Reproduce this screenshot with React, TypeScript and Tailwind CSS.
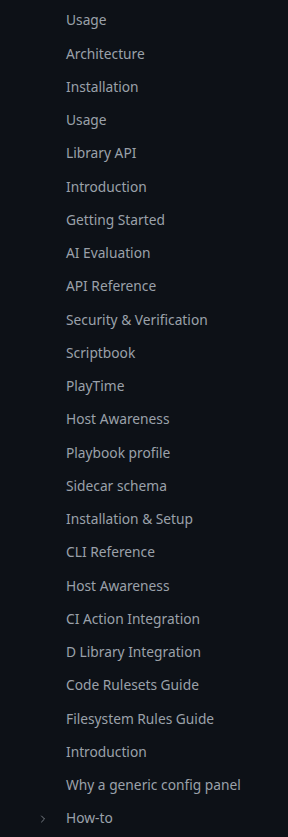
import { ChevronRight } from "lucide-react";

const items = [
  "Usage",
  "Architecture",
  "Installation",
  "Usage",
  "Library API",
  "Introduction",
  "Getting Started",
  "AI Evaluation",
  "API Reference",
  "Security & Verification",
  "Scriptbook",
  "PlayTime",
  "Host Awareness",
  "Playbook profile",
  "Sidecar schema",
  "Installation & Setup",
  "CLI Reference",
  "Host Awareness",
  "CI Action Integration",
  "D Library Integration",
  "Code Rulesets Guide",
  "Filesystem Rules Guide",
  "Introduction",
  "Why a generic config panel",
];

export default function App() {
  return (
    <nav
      className="w-[288px] h-[837px] overflow-hidden bg-[#0d1117] pt-[4px] text-[13.75px] text-[#9ba1aa]"
      style={{ fontFamily: '"Noto Sans", "Open Sans", sans-serif' }}
    >
      <ul>
        {items.map((label, i) => (
          <li key={i} className="h-[33.25px] flex items-center pl-[66px]">
            {label}
          </li>
        ))}
        <li className="h-[33.25px] flex items-center">
          <span className="w-[66px] flex justify-end pr-[17px]">
            <ChevronRight size={12} strokeWidth={1.5} />
          </span>
          How-to
        </li>
      </ul>
    </nav>
  );
}
